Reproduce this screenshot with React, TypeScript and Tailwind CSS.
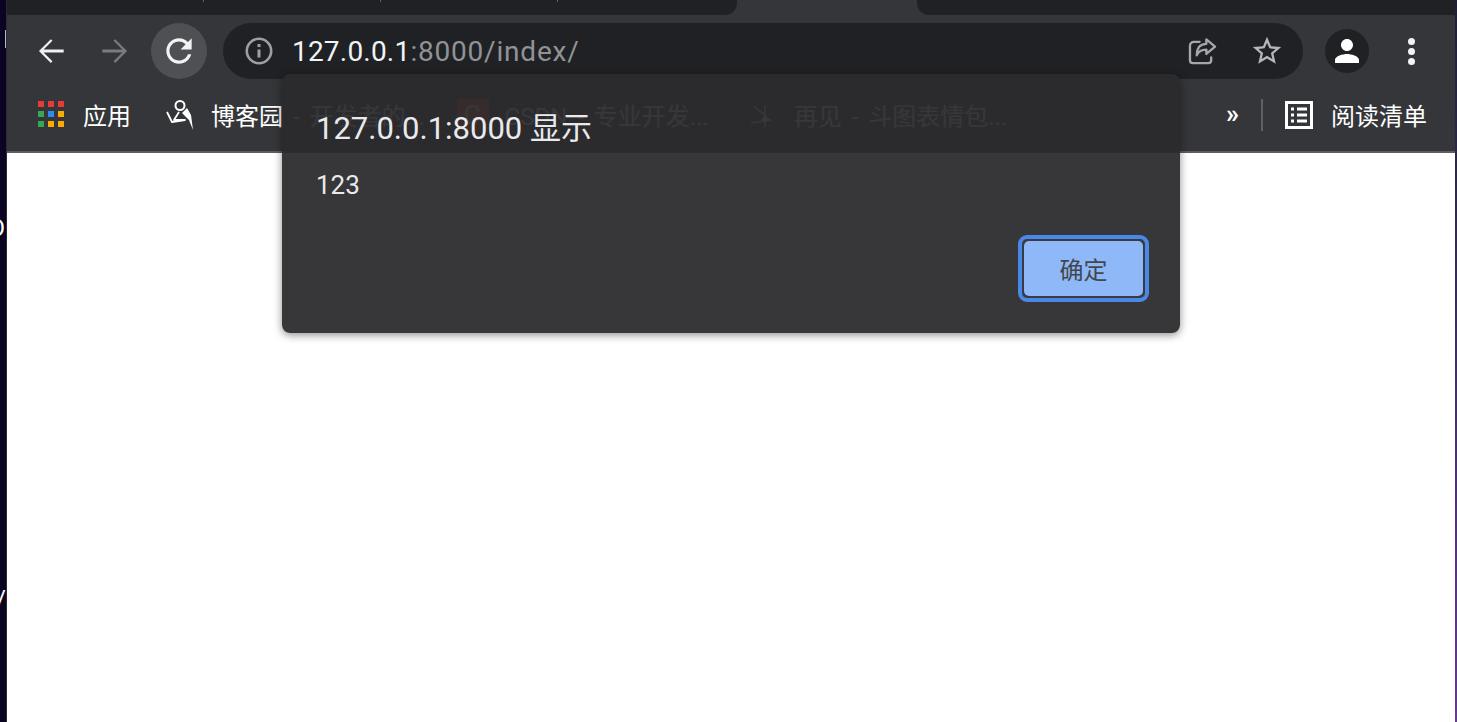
const font = "font-['Roboto','Noto_Sans_CJK_SC',sans-serif]";

function Icon({ d, className }: { d: string; className: string }) {
  return (
    <svg viewBox="0 0 24 24" fill="currentColor" className={className}>
      <path d={d} />
    </svg>
  );
}

function AppsIcon() {
  const colors = ["#ea3a35", "#ea3a35", "#ea3a35", "#34a853", "#2d8cf0", "#f9ab00", "#34a853", "#f9ab00", "#f9ab00"];
  return (
    <div className="grid grid-cols-3 gap-[4px] w-[26px] h-[26px] mb-[2px]">
      {colors.map((c, i) => (
        <span key={i} className="block w-[6px] h-[6px]" style={{ backgroundColor: c }} />
      ))}
    </div>
  );
}

function CnblogsIcon() {
  return (
    <svg viewBox="0 0 28 32" className="w-[28px] h-[32px]" fill="none" stroke="white">
      <circle cx="15" cy="6.500" r="4.500" strokeWidth="2" />
      <path d="M2 13l5 10 13-2H9l5-8" strokeWidth="1.800" strokeLinejoin="round" />
      <path d="M17 14l5-5 4 7 2 15-4-10-6-6z" fill="white" stroke="none" />
    </svg>
  );
}

function BookmarkText({ children, className = "" }: { children: React.ReactNode; className?: string }) {
  return <span className={`mt-[4px] text-[24px] leading-none whitespace-nowrap text-white [word-spacing:4px] ${className}`}>{children}</span>;
}

export default function App() {
  return (
    <div className={`relative flex w-[1457px] h-[722px] overflow-hidden bg-white ${font}`}>
      {/* desktop behind the browser window */}
      <div className="relative w-[7px] shrink-0 bg-[#0a0322] overflow-hidden border-r border-r-[#2b2b35]">
        <div className="absolute left-[5px] top-[30px] w-[2px] h-[18px] bg-[#a9bccb]" />
        <span className="absolute right-[1px] top-[216px] text-[24px] leading-[24px] text-white">O</span>
        <span className="absolute right-[0px] top-[587px] text-[24px] leading-[24px] text-white">/</span>
      </div>

      <div className="flex-1 flex flex-col min-w-0">
        {/* tab strip */}
        <div className="h-[23px] bg-[#35363a] flex shrink-0">
          <div className="w-[730px] h-[15px] bg-[#202124] rounded-br-[12px] flex">
            <div className="ml-[196px] w-[1px] h-[2px] bg-[#5f6063]" />
            <div className="ml-[176px] w-[1px] h-[2px] bg-[#5f6063]" />
            <div className="ml-[176px] w-[1px] h-[2px] bg-[#5f6063]" />
          </div>
          <div className="w-[180px]" />
          <div className="flex-1 h-[15px] bg-[#202124] rounded-bl-[12px]" />
        </div>

        {/* toolbar */}
        <div className="h-[56px] bg-[#35363a] flex items-center shrink-0 pl-[16px] pr-[16px]">
          <button className="w-[56px] h-[56px] flex items-center justify-center text-[#eef0f1]">
            <Icon className="w-[38px] h-[38px]" d="M20 11.100H7.300l5.600-5.600L11.900 4.500l-7.500 7.500 7.500 7.500 1-1-5.600-5.600H20z" />
          </button>
          <button className="ml-[8px] w-[56px] h-[56px] flex items-center justify-center text-[#7a7b7e]">
            <Icon className="w-[38px] h-[38px]" d="M4 11.100h12.700l-5.600-5.600 1-1 7.500 7.500-7.500 7.500-1-1 5.600-5.600H4z" />
          </button>
          <button className="ml-[8px] w-[56px] h-[56px] rounded-full bg-[#4f5054] flex items-center justify-center text-[#f1f3f4]">
            <Icon className="w-[38px] h-[38px]" d="M17.650 6.350C16.200 4.900 14.210 4 12 4c-4.420 0-7.990 3.580-7.990 8s3.570 8 7.990 8c3.730 0 6.840-2.550 7.730-6h-2.080c-.82 2.330-3.040 4-5.650 4-3.310 0-6-2.690-6-6s2.690-6 6-6c1.660 0 3.140.69 4.220 1.780L13 11h7V4l-2.350 2.350z" />
          </button>

          <div className="ml-[16px] w-[1080px] h-[56px] rounded-full bg-[#202124] flex items-center pl-[22px] pr-[19px]">
            <svg viewBox="0 0 28 28" className="w-[28px] h-[28px]" fill="none" stroke="#9aa0a6">
              <circle cx="14" cy="14" r="12.200" strokeWidth="2.600" />
              <path d="M14 12.500v8" strokeWidth="3" />
              <path d="M14 7v3" strokeWidth="3" />
            </svg>
            <div className="ml-[19px] mt-[1px] text-[28px] leading-none tracking-[0.2px] whitespace-nowrap">
              <span className="text-[#f1f3f4]">127.0.0.1</span>
              <span className="text-[#909396] tracking-[0.8px]">:8000/index/</span>
            </div>
            <div className="ml-auto flex items-center">
              <svg viewBox="0 0 30 28" className="w-[29px] h-[27px]" fill="none" stroke="#a4a8ac" strokeWidth="2.400" strokeLinejoin="round" strokeLinecap="round">
                <path d="M12 4H6a4 4 0 0 0-4 4v15a3 3 0 0 0 3 3h16a3 3 0 0 0 3-3v-3" />
                <path d="M19 1.500l9 7.500-9 7.500v-4.500c-5 0-8 1.500-10 6 0-7 3-12 10-12z" />
              </svg>
              <Icon className="ml-[33px] w-[34px] h-[34px] text-[#b5b8bb]" d="M22 9.240l-7.190-.62L12 2 9.190 8.630 2 9.240l5.460 4.730L5.820 21 12 17.270 18.180 21l-1.630-7.030L22 9.240zM12 15.400l-3.760 2.270 1-4.280-3.320-2.880 4.380-.38L12 6.100l1.710 4.040 4.380.38-3.320 2.880 1 4.280L12 15.400z" />
            </div>
          </div>

          <div className="ml-[22px] w-[44px] h-[44px] rounded-full bg-[#202124] flex items-center justify-center text-white shrink-0">
            <Icon className="w-[36px] h-[36px]" d="M12 12c2.210 0 4-1.790 4-4s-1.790-4-4-4-4 1.790-4 4 1.790 4 4 4zm0 2c-2.670 0-8 1.340-8 4v2h16v-2c0-2.660-5.330-4-8-4z" />
          </div>
          <div className="ml-[39px] flex flex-col gap-[3px] shrink-0">
            <span className="w-[7px] h-[7px] rounded-full bg-[#f1f3f4]" />
            <span className="w-[7px] h-[7px] rounded-full bg-[#f1f3f4]" />
            <span className="w-[7px] h-[7px] rounded-full bg-[#f1f3f4]" />
          </div>
        </div>

        {/* bookmarks bar */}
        <div className="h-[74px] bg-[#35363a] border-b-[2px] border-b-[#5d5e61] flex items-center shrink-0 pl-[31px] pr-[28px]">
          <AppsIcon />
          <BookmarkText className="ml-[19px]">应用</BookmarkText>
          <div className="ml-[34px]"><CnblogsIcon /></div>
          <BookmarkText className="ml-[18px]">博客园 - 开发者的...</BookmarkText>
          <div className="ml-[32px] w-[32px] h-[32px] flex items-center justify-center bg-[#f03a10] text-white text-[26px] leading-none">C</div>
          <BookmarkText className="ml-[16px]">CSDN - 专业开发...</BookmarkText>
          <svg viewBox="0 0 24 24" className="ml-[40px] w-[24px] h-[24px]" fill="none" stroke="white" strokeWidth="1.500">
            <path d="M2 20l20-3M16 2v22M4 3l12 9" />
            <path d="M16 12l5 5-5 2-4-2z" fill="white" stroke="none" />
          </svg>
          <BookmarkText className="ml-[21px]">再见 - 斗图表情包...</BookmarkText>
          <span className="ml-auto mb-[2px] text-[26px] leading-none text-white font-bold">»</span>
          <span className="ml-[22px] w-[2px] h-[32px] bg-[#5f6063]" />
          <svg viewBox="0 0 28 28" className="ml-[22px] w-[28px] h-[28px]" fill="none">
            <rect x="1.500" y="1.500" width="25" height="25" stroke="white" strokeWidth="3" />
            <path d="M6 8h3M12 8h10M6 14h3M12 14h10M6 20h3M12 20h10" stroke="white" strokeWidth="3" />
          </svg>
          <BookmarkText className="ml-[18px]">阅读清单</BookmarkText>
        </div>

        <div className="flex-1 bg-white" />
      </div>

      <div className="w-[2px] shrink-0 bg-linear-to-b from-[#1c2036] to-[#663a92]" />

      {/* alert dialog */}
      <div className="absolute left-[282px] top-[74px] w-[898px] h-[259px] rounded-[8px] bg-[#2a2b2e]/94 shadow-[0_2px_8px_rgba(0,0,0,0.45)] flex flex-col px-[34px]">
        <div className="mt-[36px] text-[31px] leading-[38px] text-[#e8eaed] whitespace-nowrap">127.0.0.1:8000 显示</div>
        <div className="mt-[20px] text-[26px] leading-[34px] text-[#e8eaed]">123</div>
        <div className="mt-auto mb-[31px] flex justify-end -mr-[3px]">
          <button className="w-[131px] h-[67px] rounded-[9px] border-[4px] border-[#4a88e8] bg-[#3a3b3f] p-[2px]">
            <div className="w-full h-full rounded-[5px] bg-[#8fb8f9] flex items-center justify-center pt-[4px] text-[24px] text-[#44474b]">确定</div>
          </button>
        </div>
      </div>
    </div>
  );
}
